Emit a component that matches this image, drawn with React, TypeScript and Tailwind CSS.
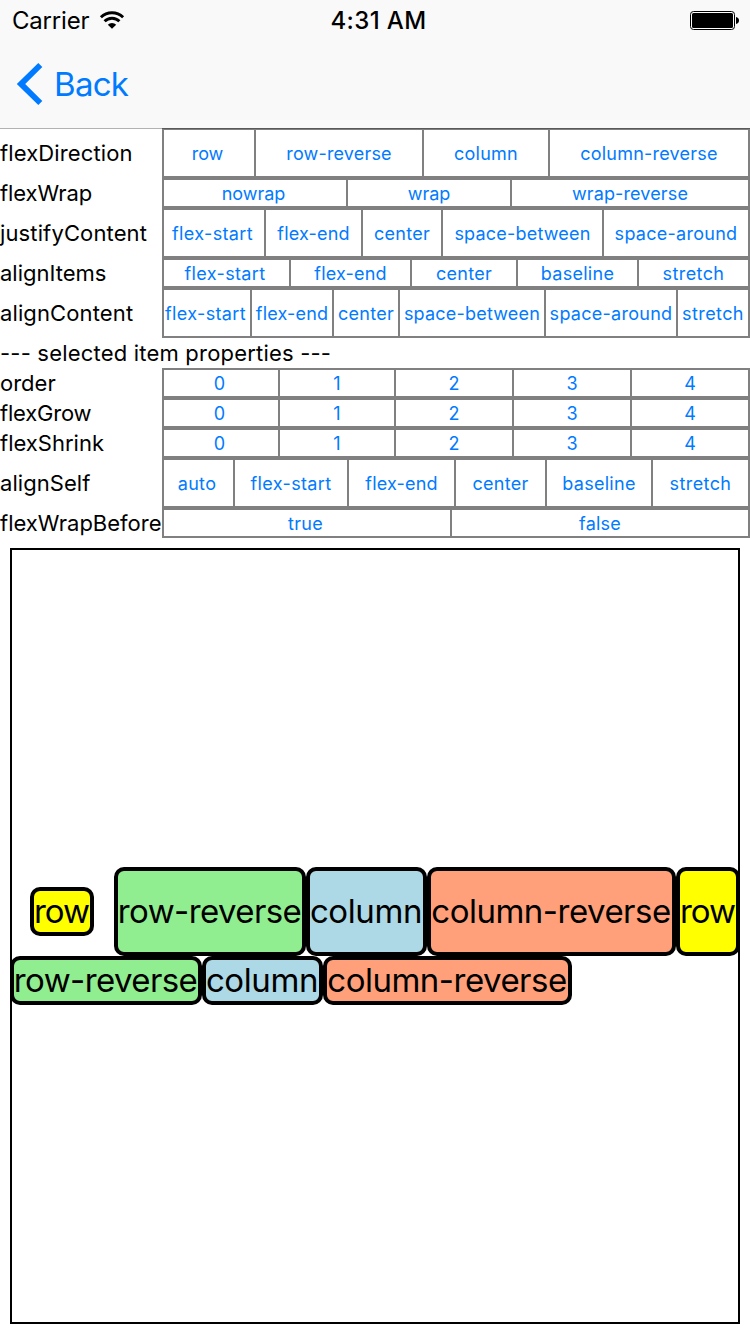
import React from "react";

type Cell = { text: string; w: string; ls?: string };
type RowData = { label: string; ls?: string; h: string; cells: Cell[] };

const FLEX_START = "tracking-[0.35px]";
const FLEX_END = "tracking-[0.17px]";
const CENTER = "tracking-[0.3px]";
const BETWEEN = "tracking-[0.2px]";
const AROUND = "tracking-[0.27px]";
const BASELINE = "tracking-[0.28px]";
const STRETCH = "tracking-[0.4px]";

const numbers: Cell[] = [
  { text: "0", w: "w-[118px]" },
  { text: "1", w: "w-[116px]" },
  { text: "2", w: "w-[118px]" },
  { text: "3", w: "w-[118px]" },
  { text: "4", w: "w-[118px]" },
];

const containerRows: RowData[] = [
  {
    label: "flexDirection", ls: "tracking-[0.12px]", h: "h-[50px]",
    cells: [
      { text: "row", w: "w-[94px]", ls: "tracking-[-0.1px]" },
      { text: "row-reverse", w: "w-[168px]", ls: "tracking-[0.17px]" },
      { text: "column", w: "w-[126px]", ls: "tracking-[0.25px]" },
      { text: "column-reverse", w: "w-[200px]", ls: "tracking-[0.23px]" },
    ],
  },
  {
    label: "flexWrap", ls: "tracking-[-0.1px]", h: "h-[30px]",
    cells: [
      { text: "nowrap", w: "w-[186px]" },
      { text: "wrap", w: "w-[164px]" },
      { text: "wrap-reverse", w: "w-[238px]", ls: "tracking-[0.12px]" },
    ],
  },
  {
    label: "justifyContent", ls: "tracking-[0.13px]", h: "h-[50px]",
    cells: [
      { text: "flex-start", w: "w-[104px]", ls: FLEX_START },
      { text: "flex-end", w: "w-[97px]", ls: FLEX_END },
      { text: "center", w: "w-[80px]", ls: CENTER },
      { text: "space-between", w: "w-[161px]", ls: BETWEEN },
      { text: "space-around", w: "w-[146px]", ls: AROUND },
    ],
  },
  {
    label: "alignItems", h: "h-[30px]",
    cells: [
      { text: "flex-start", w: "w-[129px]", ls: FLEX_START },
      { text: "flex-end", w: "w-[121px]", ls: FLEX_END },
      { text: "center", w: "w-[106px]", ls: CENTER },
      { text: "baseline", w: "w-[121px]", ls: BASELINE },
      { text: "stretch", w: "w-[111px]", ls: STRETCH },
    ],
  },
  {
    label: "alignContent", ls: "tracking-[0.12px]", h: "h-[50px]",
    cells: [
      { text: "flex-start", w: "w-[90px]", ls: FLEX_START },
      { text: "flex-end", w: "w-[82px]", ls: FLEX_END },
      { text: "center", w: "w-[66px]", ls: CENTER },
      { text: "space-between", w: "w-[146px]", ls: BETWEEN },
      { text: "space-around", w: "w-[132px]", ls: AROUND },
      { text: "stretch", w: "w-[72px]", ls: STRETCH },
    ],
  },
];

const itemRows: RowData[] = [
  { label: "order", h: "h-[30px]", cells: numbers },
  { label: "flexGrow", ls: "tracking-[-0.2px]", h: "h-[30px]", cells: numbers },
  { label: "flexShrink", h: "h-[30px]", cells: numbers },
  {
    label: "alignSelf", ls: "tracking-[0.05px]", h: "h-[50px]",
    cells: [
      { text: "auto", w: "w-[73px]", ls: "tracking-[0.3px]" },
      { text: "flex-start", w: "w-[114px]", ls: FLEX_START },
      { text: "flex-end", w: "w-[107px]", ls: FLEX_END },
      { text: "center", w: "w-[91px]", ls: CENTER },
      { text: "baseline", w: "w-[106px]", ls: BASELINE },
      { text: "stretch", w: "w-[97px]", ls: STRETCH },
    ],
  },
  {
    label: "flexWrapBefore", h: "h-[30px]",
    cells: [
      { text: "true", w: "w-[290px]", ls: "tracking-[0.3px]" },
      { text: "false", w: "w-[298px]", ls: "tracking-[0.2px]" },
    ],
  },
];

function Row({ row }: { row: RowData }) {
  return (
    <div className={`flex items-stretch ${row.h}`}>
      <div className={`flex w-[162px] shrink-0 items-center whitespace-nowrap text-[22px] leading-none ${row.ls ?? ""}`}>
        {row.label}
      </div>
      <div className="flex">
        {row.cells.map((c, i) => (
          <button
            key={c.text}
            className={`flex shrink-0 items-center justify-center whitespace-nowrap border-y-2 border-r-2 border-[#808080] pt-[2px] text-[18px] leading-none text-[#007aff] ${
              i === 0 ? "border-l-2 pr-[3px]" : "pr-0"
            } ${c.w} ${c.ls ?? ""}`}
          >
            {c.text}
          </button>
        ))}
      </div>
    </div>
  );
}

type BoxProps = { text: string; size: string; color: string; ls: string };

function Box({ text, size, color, ls }: BoxProps) {
  return (
    <div
      className={`flex shrink-0 items-center justify-center whitespace-nowrap rounded-[10px] border-4 border-black pr-px text-[33px] leading-none ${size} ${color} ${ls}`}
    >
      {text}
    </div>
  );
}

function StatusBar() {
  return (
    <div className="flex h-[40px] items-center justify-between">
      <div className="flex w-[250px] items-center pl-[12px] text-[24px] leading-none tracking-[-0.2px]">
        <span className="pt-[2px]">Carrier</span>
        <svg className="ml-[10px]" width="26" height="20" viewBox="100 10 26 20" fill="none">
          <path d="M101.9 17.2 A16.1 16.1 0 0 1 124.1 17.2" stroke="#000" strokeWidth="2.9" />
          <path d="M105.6 21.3 A10.4 10.4 0 0 1 120.4 21.3" stroke="#000" strokeWidth="2.9" />
          <path d="M113 28.8 L108.8 24.7 A5.9 5.9 0 0 1 117.2 24.7 Z" fill="#000" />
        </svg>
      </div>
      <div className="pl-[7px] pt-[2px] text-[24px] font-[550] leading-none tracking-[0.4px]">4:31 AM</div>
      <div className="flex w-[250px] justify-end pr-[10px]">
        <svg width="50" height="20" viewBox="690 10 50 20">
          <rect x="690.5" y="11.5" width="44" height="18" rx="3" fill="#fff" stroke="#000" />
          <rect x="692" y="13" width="41" height="15" rx="1.5" fill="#000" />
          <path d="M736 17 C740 17.5 740 23.5 736 24 Z" fill="#000" />
        </svg>
      </div>
    </div>
  );
}

export default function App() {
  return (
    <div className="flex h-[1334px] w-[750px] flex-col overflow-hidden bg-white text-black [font-family:Inter,'Liberation_Sans',sans-serif]">
      <header className="h-[128px] bg-[#f9f9f9]">
        <StatusBar />
        <div className="flex h-[88px] items-center pl-[16px] text-[#007aff]">
          <svg width="28" height="44" viewBox="16 62 28 44">
            <path d="M38.3 63 L42.3 67 L25.2 84 L42.3 101 L38.3 105 L16.8 84 Z" fill="currentColor" />
          </svg>
          <span className="ml-[10px] text-[33px] leading-none tracking-[-0.7px]">Back</span>
        </div>
      </header>
      <div className="relative">
        <div className="absolute left-0 top-0 z-10 h-px w-full bg-black/30" />
        {containerRows.map((r) => (
          <Row key={r.label} row={r} />
        ))}
        <div className="flex h-[30px] items-center whitespace-pre text-[22px] leading-none tracking-[0.2px]">
          --- selected item properties ---
        </div>
        {itemRows.map((r) => (
          <Row key={r.label} row={r} />
        ))}
      </div>
      <main className="m-[10px] flex flex-1 flex-col justify-center border-2 border-black">
        <div className="-mx-[2px] flex h-[89px]">
          <Box text="row" size="m-[20px] h-[49px] w-[64px]" color="bg-[#ffff00]" ls="tracking-[-1px]" />
          <Box text="row-reverse" size="w-[192px]" color="bg-[#90ee90]" ls="tracking-[-0.6px]" />
          <Box text="column" size="w-[121px]" color="bg-[#add8e6]" ls="tracking-[-0.4px]" />
          <Box text="column-reverse" size="w-[249px]" color="bg-[#ffa07a]" ls="tracking-[-0.5px]" />
          <Box text="row" size="w-[64px]" color="bg-[#ffff00]" ls="tracking-[-1px]" />
        </div>
        <div className="-mx-[2px] flex h-[49px]">
          <Box text="row-reverse" size="w-[192px]" color="bg-[#90ee90]" ls="tracking-[-0.6px]" />
          <Box text="column" size="w-[121px]" color="bg-[#add8e6]" ls="tracking-[-0.4px]" />
          <Box text="column-reverse" size="w-[249px]" color="bg-[#ffa07a]" ls="tracking-[-0.5px]" />
        </div>
      </main>
    </div>
  );
}
